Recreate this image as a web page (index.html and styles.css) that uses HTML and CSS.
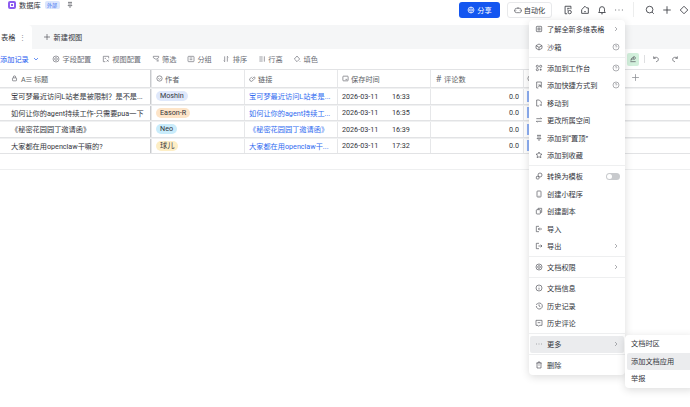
FILE: index.html
```html
<!DOCTYPE html>
<html lang="zh-CN">
<head>
    <meta charset="UTF-8">
    <title>数据库</title>
    <link rel="stylesheet" href="styles.css">
</head>
<body>
    <svg width="0" height="0" class="defs">
        <symbol id="i-help" viewBox="0 0 12 12"><circle cx="6" cy="6" r="4.5"/><path d="M4.800 5a1.200 1.200 0 1 1 1.800 1c-.4.3-.6.5-.6.9M6 8.500v.2"/></symbol>
        <symbol id="i-right" viewBox="0 0 12 12"><path d="M4.500 3l3 3-3 3"/></symbol>
        <symbol id="i-dots" viewBox="0 0 12 12"><path d="M1.500 6h1M5.500 6h1M9.500 6h1"/></symbol>
    </svg>

    <header class="topbar">
        <div class="doc-title">
            <span class="doc-icon"><i></i></span>
            <span class="doc-name">数据库</span>
            <span class="doc-tag">外部</span>
            <svg class="ico" viewBox="0 0 12 12"><path d="M3 2h6M4.500 2v3.500L3 7h6L7.500 5.500V2M6 7v3.500"/></svg>
        </div>
        <div class="top-actions">
            <button class="btn-share">
                <svg class="ico" viewBox="0 0 12 12"><circle cx="6" cy="6" r="4.500"/><path d="M1.500 6h9M6 1.500c-2.400 2.700-2.400 6.300 0 9M6 1.500c2.400 2.700 2.400 6.300 0 9"/></svg>
                分享
            </button>
            <button class="btn-auto">
                <svg class="ico" viewBox="0 0 12 12"><rect x="1.500" y="3.500" width="9" height="6.500" rx="2"/><path d="M6 1.500v2M4 6.500h.5M7.500 6.500H8M.5 6v2M11.500 6v2"/></svg>
                自动化
            </button>
            <svg class="ico top-ico top-first" viewBox="0 0 12 12"><path d="M9.500 5V1.500h-7v9H5M5 4h3M5 6h1.500"/><circle cx="8" cy="8.500" r="2"/></svg>
            <svg class="ico top-ico" viewBox="0 0 12 12"><path d="M6 1.500l2 2h2v6.500H2V5.500z"/><path d="M5 8h2"/></svg>
            <svg class="ico top-ico" viewBox="0 0 12 12"><path d="M2 9h8L9 7.500V5a3 3 0 0 0-6 0v2.500zM5 10.500h2"/></svg>
            <svg class="ico top-ico" viewBox="0 0 12 12"><use href="#i-dots"/></svg>
            <span class="top-sep"></span>
            <svg class="ico top-ico" viewBox="0 0 12 12"><circle cx="5.500" cy="5.500" r="4"/><path d="M8.500 8.500l2 2"/></svg>
            <svg class="ico top-ico" viewBox="0 0 12 12"><path d="M6 1.500v9M1.500 6h9"/></svg>
            <svg class="ico top-ico" viewBox="0 0 12 12"><path d="M6 1.500L10.500 6 6 10.500 1.500 6z"/></svg>
        </div>
    </header>

    <nav class="tabbar">
        <div class="tab-active">表格 <span class="tab-more">⋮</span></div>
        <div class="tab-new"><svg class="ico" viewBox="0 0 12 12"><path d="M6 1.500v9M1.500 6h9"/></svg>新建视图</div>
    </nav>

    <div class="toolbar">
        <span class="add-record">添加记录
            <svg class="ico" viewBox="0 0 12 12"><path d="M3 4.500l3 3 3-3"/></svg>
        </span>
        <span class="tool"><svg class="ico" viewBox="0 0 12 12"><circle cx="6" cy="6" r="4.500"/><circle cx="6" cy="6" r="2"/></svg>字段配置</span>
        <span class="tool"><svg class="ico" viewBox="0 0 12 12"><path d="M10 5V2H2v8h3M4 5h2M7 7l3 3M7 10l3-3"/></svg>视图配置</span>
        <span class="tool"><svg class="ico" viewBox="0 0 12 12"><path d="M2 2h8v2L7 6H5L2 4zM7 9h3M7 7.500h3"/></svg>筛选</span>
        <span class="tool"><svg class="ico" viewBox="0 0 12 12"><rect x="1.500" y="2" width="9" height="8" rx="1"/><path d="M4 4.500h4M4 7h4"/></svg>分组</span>
        <span class="tool"><svg class="ico" viewBox="0 0 12 12"><path d="M4 2v8M2.500 8.500L4 10M8 10V2M9.500 3.500L8 2"/></svg>排序</span>
        <span class="tool"><svg class="ico" viewBox="0 0 12 12"><path d="M2 3h5M2 6h5M2 9h5M9.500 2v8"/></svg>行高</span>
        <span class="tool"><svg class="ico" viewBox="0 0 12 12"><path d="M6 1.500L10 6l-4 4-4-4zM10.500 9v1"/></svg>填色</span>
        <span class="tool-right">
            <span class="tool-share"><svg class="ico" viewBox="0 0 12 12"><path d="M2 10h8M3 8c0-3 2-4.500 4.500-4.500V2L10 4.500 7.500 7V5.500C5.500 5.500 4 6.500 3 8z"/></svg></span>
            <span class="tool-sep"></span>
            <svg class="ico undo" viewBox="0 0 12 12"><path d="M2.500 2v3h3M2.500 5c2-2.500 7-2 7 1.500 0 2-1.500 3.500-3.500 3.500"/></svg>
            <svg class="ico redo" viewBox="0 0 12 12"><path d="M9.500 2v3h-3M9.500 5c-2-2.500-7-2-7 1.500 0 2 1.500 3.500 3.500 3.500"/></svg>
        </span>
    </div>

    <section class="sheet">
        <div class="row head">
            <div class="cell c-title"><svg class="ico" viewBox="0 0 12 12"><rect x="2.500" y="5" width="7" height="5" rx="1"/><path d="M4 5V3.500a2 2 0 0 1 4 0V5"/></svg><span class="type-a">A≡</span>标题</div>
            <div class="cell"><svg class="ico" viewBox="0 0 12 12"><circle cx="6" cy="6" r="4.500"/><path d="M4 5.500l2 2 2-2"/></svg>作者</div>
            <div class="cell"><svg class="ico" viewBox="0 0 12 12"><path d="M5 7l3-3a1.400 1.400 0 0 1 2 2L6 10a2.800 2.800 0 0 1-4-4l3-3"/></svg>链接</div>
            <div class="cell"><svg class="ico" viewBox="0 0 12 12"><rect x="1.500" y="2" width="9" height="8" rx="1"/><path d="M6 7.500h3"/></svg>保存时间</div>
            <div class="cell"><span class="hash">#</span>评论数</div>
            <div class="cell c-last"><svg class="ico" viewBox="0 0 12 12"><circle cx="6" cy="6" r="4.500"/></svg></div>
        </div>
        <div class="row">
            <div class="cell c-title">宝可梦最近访问L站老是被限制？是不是...</div>
            <div class="cell"><span class="pill pill-blue">Moshin</span></div>
            <div class="cell link">宝可梦最近访问L站老是...</div>
            <div class="cell"><span class="date">2026-03-11</span>16:33</div>
            <div class="cell num">0.0</div>
            <div class="cell c-last"><i class="bar"></i></div>
        </div>
        <div class="row">
            <div class="cell c-title">如何让你的agent持续工作-只需要pua一下</div>
            <div class="cell"><span class="pill pill-orange">Eason-R</span></div>
            <div class="cell link">如何让你的agent持续工...</div>
            <div class="cell"><span class="date">2026-03-11</span>16:35</div>
            <div class="cell num">0.0</div>
            <div class="cell c-last"><i class="bar"></i></div>
        </div>
        <div class="row">
            <div class="cell c-title">《秘密花园园丁邀请函》</div>
            <div class="cell"><span class="pill pill-cyan">Neo</span></div>
            <div class="cell link">《秘密花园园丁邀请函》</div>
            <div class="cell"><span class="date">2026-03-11</span>16:39</div>
            <div class="cell num">0.0</div>
            <div class="cell c-last"><i class="bar"></i></div>
        </div>
        <div class="row">
            <div class="cell c-title">大家都在用openclaw干嘛的?</div>
            <div class="cell"><span class="pill pill-yellow">球儿</span></div>
            <div class="cell link">大家都在用openclaw干...</div>
            <div class="cell"><span class="date">2026-03-11</span>17:32</div>
            <div class="cell num">0.0</div>
            <div class="cell c-last"><i class="bar"></i></div>
        </div>
    </section>
    <div class="sheet-foot"></div>
    <svg class="ico add-col" viewBox="0 0 12 12"><path d="M6 1.500v9M1.500 6h9"/></svg>

    <aside class="menu">
        <div class="m-item"><svg class="ico" viewBox="0 0 12 12"><rect x="2" y="2" width="8" height="8" rx="1"/><rect x="4.500" y="4.500" width="3" height="3"/></svg><span class="m-label">了解全新多维表格</span><svg class="chev"><use href="#i-right"/></svg></div>
        <div class="m-item"><svg class="ico" viewBox="0 0 12 12"><path d="M6 1.500l4.500 2.500v4L6 10.500 1.500 8V4zM1.500 4L6 6.500 10.500 4M6 6.500v4"/></svg><span class="m-label">沙箱</span><svg class="help"><use href="#i-help"/></svg></div>
        <hr>
        <div class="m-item"><svg class="ico" viewBox="0 0 12 12"><rect x="2" y="2" width="3" height="3" rx="1"/><rect x="7" y="2" width="3" height="3" rx="1"/><rect x="2" y="7" width="3" height="3" rx="1"/><path d="M8.500 7v3M7 8.500h3"/></svg><span class="m-label">添加到工作台</span><svg class="help"><use href="#i-help"/></svg></div>
        <div class="m-item"><svg class="ico" viewBox="0 0 12 12"><path d="M5 10.500H2.500v-9h7V10M5 6h3v3M8 6l-3 3"/></svg><span class="m-label">添加快捷方式到</span><svg class="help"><use href="#i-help"/></svg></div>
        <div class="m-item"><svg class="ico" viewBox="0 0 12 12"><path d="M6 10.500H2.500v-9h4l3 3V7M7 9h3M9 8l1 1-1 1"/></svg><span class="m-label">移动到</span></div>
        <div class="m-item"><svg class="ico" viewBox="0 0 12 12"><path d="M2 4h8L8.500 2.500M10 8H2l1.500 1.500"/></svg><span class="m-label">更改所属空间</span></div>
        <div class="m-item"><svg class="ico" viewBox="0 0 12 12"><path d="M3 2h6M4.500 2v3.500L3 7h6L7.500 5.500V2M6 7v3.500"/></svg><span class="m-label">添加到“置顶”</span></div>
        <div class="m-item"><svg class="ico" viewBox="0 0 12 12"><path d="M6 1.500l1.400 2.900 3.100.4-2.300 2.200.6 3.100L6 8.600l-2.800 1.500.6-3.100L1.500 4.800l3.100-.4z"/></svg><span class="m-label">添加到收藏</span></div>
        <hr>
        <div class="m-item"><svg class="ico" viewBox="0 0 12 12"><circle cx="7.500" cy="4.500" r="3"/><rect x="2" y="6.500" width="4" height="4" rx="1"/></svg><span class="m-label">转换为模板</span><i class="toggle"></i></div>
        <div class="m-item"><svg class="ico" viewBox="0 0 12 12"><rect x="3" y="1.500" width="6" height="9" rx="1"/><path d="M5.500 9h1"/></svg><span class="m-label">创建小程序</span></div>
        <div class="m-item"><svg class="ico" viewBox="0 0 12 12"><rect x="2" y="4" width="6" height="6.500" rx="1"/><path d="M4.500 4V2h5.500v6H8"/></svg><span class="m-label">创建副本</span></div>
        <div class="m-item"><svg class="ico" viewBox="0 0 12 12"><path d="M6 2H2v8h4M10.500 6H5M7 4L5 6l2 2"/></svg><span class="m-label">导入</span></div>
        <div class="m-item"><svg class="ico" viewBox="0 0 12 12"><path d="M6 2H2v8h4M5 6h5.500M8.500 4l2 2-2 2"/></svg><span class="m-label">导出</span><svg class="chev"><use href="#i-right"/></svg></div>
        <hr>
        <div class="m-item"><svg class="ico" viewBox="0 0 12 12"><circle cx="6" cy="6" r="4.500"/><circle cx="6" cy="6" r="2"/></svg><span class="m-label">文档权限</span><svg class="chev"><use href="#i-right"/></svg></div>
        <hr>
        <div class="m-item"><svg class="ico" viewBox="0 0 12 12"><circle cx="6" cy="6" r="4.500"/><path d="M6 5.500V8.500M6 3.500v.5"/></svg><span class="m-label">文档信息</span></div>
        <div class="m-item"><svg class="ico" viewBox="0 0 12 12"><path d="M2 6a4.500 4.500 0 1 0 1.500-3.300L1.500 4M6 3.500V6l2 1"/></svg><span class="m-label">历史记录</span></div>
        <div class="m-item"><svg class="ico" viewBox="0 0 12 12"><path d="M1.500 2h9v7.500H7L5.500 11 4.500 9.500h-3zM4 5.500h4"/></svg><span class="m-label">历史评论</span></div>
        <hr>
        <div class="m-item m-hover"><svg class="ico" viewBox="0 0 12 12"><use href="#i-dots"/></svg><span class="m-label">更多</span><svg class="chev"><use href="#i-right"/></svg></div>
        <hr>
        <div class="m-item"><svg class="ico" viewBox="0 0 12 12"><path d="M2 3h8M4.500 3V1.500h3V3M3 3v7.500h6V3M5 6h2"/></svg><span class="m-label">删除</span></div>
    </aside>

    <aside class="submenu">
        <div class="sub-item">文档时区</div>
        <div class="sub-item sub-hover">添加文档应用</div>
        <div class="sub-item">举报</div>
    </aside>
</body>
</html>
```

FILE: styles.css
```css
* {
    box-sizing: border-box;
    margin: 0;
    padding: 0;
}

html, body {
    height: 100%;
    overflow: hidden;
}

body {
    background-color: #fff;
    color: #33353c;
    font-family: Roboto, "Noto Sans CJK SC", sans-serif;
    font-size: 7.2px;
    position: relative;
}

.defs {
    position: absolute;
}

.ico, .chev, .help {
    width: 8px;
    height: 8px;
    flex: none;
    fill: none;
    stroke: #4e5058;
    stroke-width: 1;
}

/* top bar */
.topbar {
    height: 25px;
    display: flex;
    align-items: center;
    justify-content: space-between;
    padding-left: 8px;
}

.doc-title {
    display: flex;
    align-items: center;
    margin-top: -15px;
    gap: 3px;
}

.doc-icon {
    width: 8px;
    height: 8px;
    border-radius: 2px;
    background-color: #8d5cf0;
    display: flex;
    align-items: center;
    justify-content: center;
}

.doc-icon i {
    width: 4px;
    height: 4px;
    border: 1px solid #fff;
}

.doc-tag {
    background-color: #dbe6fd;
    color: #3b70f0;
    font-size: 5px;
    padding: 0 2.500px;
    border-radius: 2px;
    line-height: 8px;
    margin: 0 3px 0 1px;
}

.top-actions {
    display: flex;
    align-items: center;
    padding-bottom: 6px;
    width: 231px;
}

.btn-share {
    width: 41px;
    height: 16px;
    background-color: #1456f0;
    border: none;
    border-radius: 3px;
    color: #fff;
    font: inherit;
    display: flex;
    align-items: center;
    justify-content: center;
    gap: 2px;
}

.btn-share .ico {
    stroke: #fff;
}

.btn-auto {
    width: 45px;
    height: 16px;
    margin-left: 7px;
    background-color: #fff;
    border: 1px solid #e8e9eb;
    border-radius: 3px;
    color: #33353c;
    font: inherit;
    display: flex;
    align-items: center;
    justify-content: center;
    gap: 2px;
}

.top-ico {
    width: 10px;
    height: 10px;
    margin-left: 7px;
    stroke: #33353c;
}

.top-first {
    margin-left: 11px;
}

.top-sep {
    width: 1px;
    height: 15px;
    background-color: #eceded;
    margin: 0 4px 0 9px;
}

/* view tabs */
.tabbar {
    height: 24px;
    background-color: #f5f6f7;
    display: flex;
    align-items: stretch;
}

.tab-active {
    width: 32px;
    background-color: #fff;
    border-radius: 0 4px 0 0;
    display: flex;
    align-items: center;
    gap: 4px;
    padding-left: 1px;
}

.tab-more {
    color: #8a8c92;
}

.tab-new {
    display: flex;
    align-items: center;
    padding-left: 11px;
    gap: 2.500px;
}

/* toolbar */
.toolbar {
    height: 20px;
    display: flex;
    align-items: center;
    color: #6b6d75;
    position: relative;
}

.add-record {
    color: #1d5bf0;
    display: flex;
    align-items: center;
    width: 52px;
    white-space: nowrap;
    gap: 3px;
}

.add-record .ico {
    stroke: #1d5bf0;
}

.tool {
    display: flex;
    align-items: center;
    gap: 2.500px;
    margin-right: 10.500px;
    white-space: nowrap;
}

.tool .ico {
    stroke: #6b6d75;
}

.tool-right {
    position: absolute;
    left: 627px;
    top: 3.500px;
    display: flex;
    align-items: center;
}

.tool-share {
    width: 12px;
    height: 13px;
    background-color: #d2f0dc;
    border-radius: 2px;
    display: flex;
    align-items: center;
    justify-content: center;
}

.tool-sep {
    width: 1px;
    height: 8px;
    background-color: #dedfe1;
    margin-left: 5px;
}

.undo {
    margin-left: 7px;
}

.redo {
    margin-left: 11px;
}

/* table */
.sheet {
    border-top: 1px solid #e2e3e5;
}

.row {
    display: grid;
    grid-template-columns: 151px 93px 93px 93px 93px 1fr;
    height: 16.500px;
    border-bottom: 1px solid #e2e3e5;
}

.row.head {
    height: 18px;
}

.row:not(.head) {
    border-top: 1px solid #f0f1f2;
}

.cell {
    display: flex;
    align-items: center;
    gap: 3px;
    padding-left: 4px;
    border-left: 1px solid #e6e7e9;
    white-space: nowrap;
    overflow: hidden;
}

.head .cell {
    color: #5d5f66;
    gap: 2px;
}

.head .ico {
    width: 7px;
    height: 7px;
}

.c-title {
    padding-left: 11px;
    border-left: none;
    border-right: 1px solid #c9cbce;
}

.type-a {
    margin-left: 1px;
    letter-spacing: -0.500px;
}

.link {
    color: #2f6bf0;
}

.date {
    width: 47px;
}

.num {
    justify-content: flex-end;
    padding-right: 4px;
}

.hash {
    width: 7px;
    font-size: 9px;
    color: #6b6d75;
    text-align: center;
}

.pill {
    padding: 0 4px;
    height: 10px;
    line-height: 10px;
    border-radius: 5px;
}

.pill-blue { background-color: #dfe8fb; }
.pill-orange { background-color: #fde4c8; }
.pill-cyan { background-color: #c9ecfb; }
.pill-yellow { background-color: #fdeec5; }

.c-last {
    padding-left: 3px;
}

.bar {
    width: 2px;
    height: 11px;
    background-color: #8fb0f5;
}

.sheet-foot {
    height: 1px;
    margin-top: 15px;
    background-color: #eeeff0;
}

.add-col {
    position: absolute;
    left: 631px;
    top: 73px;
    width: 9px;
    height: 9px;
    stroke: #8a8c92;
}

/* dropdown menu */
.menu {
    position: absolute;
    left: 529px;
    top: 20px;
    width: 96px;
    height: 355px;
    background-color: #fff;
    border-radius: 4px;
    box-shadow: 0 2px 8px rgba(0, 0, 0, 0.14);
    padding: 0.500px 1px 0;
}

.m-item {
    height: 17.500px;
    display: flex;
    align-items: center;
    gap: 4px;
    padding: 0 4px 0 5px;
    border-radius: 2px;
    white-space: nowrap;
}

.m-label {
    flex: 1;
}

.chev, .help {
    stroke: #85878d;
}

.menu hr {
    border: none;
    border-top: 1px solid #eeeff0;
    margin: 1.250px -1px;
    height: 1px;
}

.m-hover {
    background-color: #ebecee;
}

.toggle {
    width: 14px;
    height: 7px;
    border-radius: 4px;
    background-color: #c8cacd;
    position: relative;
}

.toggle::after {
    content: "";
    position: absolute;
    left: 1px;
    top: 1px;
    width: 5px;
    height: 5px;
    border-radius: 50%;
    background-color: #fff;
}

/* sub menu */
.submenu {
    position: absolute;
    left: 625px;
    top: 335px;
    width: 70px;
    height: 53px;
    background-color: #fff;
    border-radius: 4px;
    box-shadow: 0 2px 8px rgba(0, 0, 0, 0.14);
    padding-left: 2px;
}

.sub-item {
    height: 17.500px;
    line-height: 17.500px;
    padding-left: 4px;
    border-radius: 2px;
}

.sub-hover {
    background-color: #ebecee;
}
```
